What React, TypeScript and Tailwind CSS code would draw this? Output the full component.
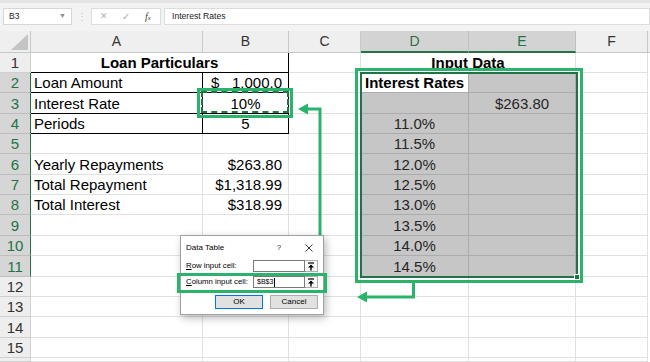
import React from 'react';

const aText: Record<number, string> = {
  2: 'Loan Amount',
  3: 'Interest Rate',
  4: 'Periods',
  6: 'Yearly Repayments',
  7: 'Total Repayment',
  8: 'Total Interest',
};
const bText: Record<number, string> = { 6: '$263.80', 7: '$1,318.99', 8: '$318.99' };
const dText: Record<number, string> = {
  4: '11.0%',
  5: '11.5%',
  6: '12.0%',
  7: '12.5%',
  8: '13.0%',
  9: '13.5%',
  10: '14.0%',
  11: '14.5%',
};

const base = 'flex items-center overflow-hidden whitespace-nowrap leading-[17px]';
const grid = 'border-r border-b border-[#e1e1e1]';
const blk = 'border-r border-b border-black';
const sel = 'bg-[#c6c6c6] border-r border-b border-[#acacac] text-[#262626]';

function UpIcon() {
  return (
    <svg width="8" height="9" viewBox="0 0 8 9">
      <line x1="1" y1="1" x2="7" y2="1" stroke="#000" strokeWidth="1.2" />
      <polygon points="4,2.5 1,5.5 7,5.5" fill="#000" />
      <line x1="4" y1="5" x2="4" y2="8.5" stroke="#000" strokeWidth="1.4" />
    </svg>
  );
}

function Row({ r }: { r: number }) {
  const hl = r >= 2 && r <= 11;
  const last = r === 16;
  const hdr = hl
    ? 'bg-[#d6d6d6] border-b border-[#bdbdbd] border-r border-r-[#217346] text-[#217346]'
    : 'bg-[#eeeeee] border-r border-b border-[#d0d0d0] text-[#333]';
  const cells: React.ReactNode[] = [];
  cells.push(
    <div key="h" className={`${base} ${hdr} justify-center text-[15px]`}>
      {last ? '' : r}
    </div>
  );
  if (r === 1) {
    cells.push(
      <div key="ab" className={`${base} ${blk} col-span-2 justify-center font-bold text-[15px]`}>
        Loan Particulars
      </div>
    );
    cells.push(<div key="c" className={`${base} ${grid}`} />);
    cells.push(
      <div key="de" className={`${base} ${grid} col-span-2 justify-center font-bold text-[15px]`}>
        Input Data
      </div>
    );
  } else {
    const inBox = r >= 2 && r <= 4;
    cells.push(
      <div key="a" className={`${base} ${inBox ? blk : grid} pl-[3px] text-[15px]`}>
        {aText[r] ?? ''}
      </div>
    );
    let bContent: React.ReactNode = null;
    let bAlign = 'justify-end pr-[6px]';
    if (r === 2) {
      bAlign = 'justify-between pl-[8px] pr-[6px]';
      bContent = (
        <>
          <span>$</span>
          <span>1,000.0</span>
        </>
      );
    } else if (r === 3) {
      bAlign = 'justify-center';
      bContent = '10%';
    } else if (r === 4) {
      bAlign = 'justify-center';
      bContent = '5';
    } else {
      bContent = bText[r] ?? '';
    }
    cells.push(
      <div key="b" className={`${base} ${inBox ? blk : grid} ${bAlign} text-[15px]`}>
        {bContent}
      </div>
    );
    cells.push(<div key="c" className={`${base} ${grid}`} />);
    if (r === 2) {
      cells.push(
        <div key="d" className={`${base} bg-white border-r border-b border-[#acacac] pl-[4px] font-bold text-[15px]`}>
          Interest Rates
        </div>
      );
    } else if (hl) {
      cells.push(
        <div key="d" className={`${base} ${sel} justify-center text-[15px]`}>
          {dText[r] ?? ''}
        </div>
      );
    } else {
      cells.push(<div key="d" className={`${base} ${grid}`} />);
    }
    if (hl) {
      cells.push(
        <div key="e" className={`${base} ${sel} justify-center text-[15px]`}>
          {r === 3 ? '$263.80' : ''}
        </div>
      );
    } else {
      cells.push(<div key="e" className={`${base} ${grid}`} />);
    }
  }
  cells.push(<div key="f" className={`${base} ${grid}`} />);
  cells.push(<div key="g" className={`${base}`} />);
  return <>{cells}</>;
}

export default function App() {
  const rows = Array.from({ length: 16 }, (_, i) => i + 1);
  const colHdr = 'flex items-center justify-center bg-[#efefef] border-r border-b border-[#c8c8c8] text-[14px] text-[#333] leading-[17px]';
  const colHdrSel =
    'flex items-center justify-center bg-[#d3d3d3] border-r border-[#c0c0c0] border-b-2 border-b-[#217346] text-[14px] text-[#217346] leading-[17px]';
  return (
    <div className="relative w-[650px] h-[362px] overflow-hidden bg-white font-['Liberation_Sans',sans-serif] text-black">
      {/* toolbar */}
      <div className="h-[31px] bg-[#f3f3f3] flex flex-col">
        <div className="h-[3px] bg-[#e4e4e4]" />
        <div className="flex items-center mt-[5px] h-[17px]">
          <div className="ml-[3px] w-[69px] h-[17px] bg-white border border-[#d6d6d6] flex items-center pl-[5px] pr-[5px] text-[8.5px] text-[#222]">
            <span className="flex-1">B3</span>
            <span className="text-[7px] text-[#8a8a8a]">▼</span>
          </div>
          <div className="w-[19px] flex justify-center text-[10px] text-[#c2c2c2]">⋮</div>
          <div className="w-[70px] h-[17px] bg-white border border-[#dcdcdc] flex items-center text-[#b0b0b0]">
            <span className="w-[24px] text-center text-[9px]">✕</span>
            <span className="w-[20px] text-center text-[10px]">✓</span>
            <span className="w-[24px] text-center font-['Liberation_Serif',serif] italic text-[10px] text-[#444]">
              f<span className="text-[7px]">x</span>
            </span>
          </div>
          <div className="ml-[3px] flex-1 h-[17px] bg-white border border-[#dcdcdc] flex items-center pl-[7px] text-[8.6px] text-[#222]">
            Interest Rates
          </div>
        </div>
      </div>
      {/* sheet */}
      <div className="grid grid-cols-[31px_172px_86px_72px_108px_107px_72px_2px] grid-rows-[22px_20px_20px_21px_20px_20px_21px_20px_20px_21px_20px_21px_20px_20px_21px_20px_4px]">
        <div className="relative bg-[#efefef] border-r border-b border-[#c8c8c8]">
          <svg className="absolute right-[2px] bottom-[2px]" width="17" height="16" viewBox="0 0 17 16">
            <polygon points="17,0 17,16 0,16" fill="#c4c4c4" />
          </svg>
        </div>
        <div className={colHdr}>A</div>
        <div className={colHdr}>B</div>
        <div className={colHdr}>C</div>
        <div className={colHdrSel}>D</div>
        <div className={colHdrSel}>E</div>
        <div className={colHdr}>F</div>
        <div className="bg-[#efefef] border-b border-[#c8c8c8]" />
        {rows.map((r) => (
          <Row key={r} r={r} />
        ))}
      </div>

      {/* selection + highlight overlays */}
      <div className="absolute left-[360px] top-[72px] w-[218px] h-[206px] border-2 border-[#217346] pointer-events-none" />
      <div className="absolute left-[574px] top-[274px] w-[6px] h-[6px] bg-[#217346] border border-white" />
      <div className="absolute left-[355px] top-[68px] w-[228px] h-[215px] border-[3px] border-[#29b36b] pointer-events-none" />
      <div className="absolute left-[201px] top-[91px] w-[88px] h-[22px] border-2 border-dashed border-[#217346] pointer-events-none" />
      <div className="absolute left-[197px] top-[88px] w-[96px] h-[30px] border-[3px] border-[#29b36b] pointer-events-none" />

      <svg className="absolute left-0 top-0 pointer-events-none" width="650" height="362" viewBox="0 0 650 362">
        <polyline points="320,236 320,109 306,109" fill="none" stroke="#29b36b" strokeWidth="3" />
        <polygon points="298,109 308,103.5 308,114.5" fill="#29b36b" />
        <polyline points="413.5,282 413.5,297 365,297" fill="none" stroke="#29b36b" strokeWidth="3" />
        <polygon points="357,297 367,291.5 367,302.5" fill="#29b36b" />
      </svg>

      {/* dialog */}
      <div className="absolute left-[180px] top-[235px] w-[144px] h-[80px] bg-white border border-[#a0a0a0] shadow-[2px_3px_8px_rgba(0,0,0,0.28)] flex flex-col text-[8px] text-black leading-[10px]">
        <div className="h-[24px] flex items-center pl-[5px]">
          <span className="w-[87px]">Data Table</span>
          <span className="w-[12px] text-center text-[#333]">?</span>
          <span className="ml-[18px] w-[12px] flex justify-center">
            <svg width="8" height="8" viewBox="0 0 8 8">
              <line x1="0.5" y1="0.5" x2="7.5" y2="7.5" stroke="#222" strokeWidth="0.9" />
              <line x1="7.5" y1="0.5" x2="0.5" y2="7.5" stroke="#222" strokeWidth="0.9" />
            </svg>
          </span>
        </div>
        <div className="h-[12px] flex items-center px-[5px]">
          <span className="flex-1 text-[7.8px]">
            <span className="underline">R</span>ow input cell:
          </span>
          <div className="w-[52px] h-[12px] bg-white border border-[#7a7a7a]" />
          <div className="w-[13px] h-[12px] bg-[#fbfbfb] border border-[#adadad] border-l-0 flex items-center justify-center">
            <UpIcon />
          </div>
        </div>
        <div className="h-[12px] mt-[4px] flex items-center px-[5px]">
          <span className="flex-1 text-[7.8px]">
            <span className="underline">C</span>olumn input cell:
          </span>
          <div className="w-[52px] h-[12px] bg-white border border-[#7a7a7a] flex items-center pl-[3px] text-[7px]">
            $B$3<span className="ml-[1px] w-[1px] h-[9px] bg-black" />
          </div>
          <div className="w-[13px] h-[12px] bg-[#fbfbfb] border border-[#adadad] border-l-0 flex items-center justify-center">
            <UpIcon />
          </div>
        </div>
        <div className="mt-[7px] flex justify-end gap-[7px] pr-[5px]">
          <div className="w-[48px] h-[14px] bg-[#e1e1e1] border border-[#0078d7] flex items-center justify-center">OK</div>
          <div className="w-[48px] h-[14px] bg-[#e1e1e1] border border-[#adadad] flex items-center justify-center">Cancel</div>
        </div>
      </div>
      <div className="absolute left-[177px] top-[273px] w-[150px] h-[20px] border-[3px] border-[#29b36b] pointer-events-none" />
    </div>
  );
}
